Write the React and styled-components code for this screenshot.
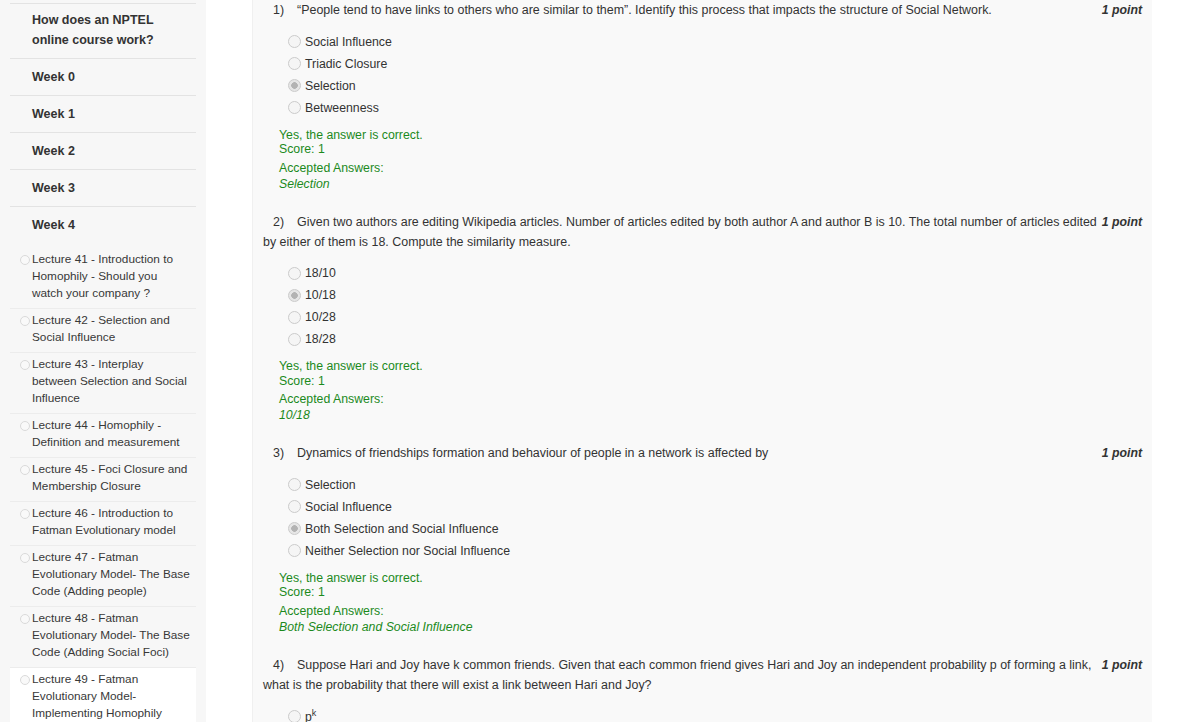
import React from "react";
import styled, { createGlobalStyle } from "styled-components";

const GlobalStyle = createGlobalStyle`
    body {
        margin: 0;
        background: #fff;
        font-family: "Liberation Sans", Arial, sans-serif;
        color: #333;
    }
`;

const Page = styled.div`
    display: flex;
    align-items: stretch;
    height: 722px;
    overflow: hidden;
`;

const Sidebar = styled.nav`
    width: 206px;
    flex-shrink: 0;
    box-sizing: border-box;
    background: #f7f7f7;
    padding: 3px 10px 0;
`;

const NavHeading = styled.div`
    padding: ${(props) => (props.$tall ? "6px 10px 8px 22px" : "11px 10px 11px 22px")};
    line-height: ${(props) => (props.$tall ? "20px" : "14px")};
    font-size: 12.5px;
    font-weight: bold;
    color: #333;
    border-top: ${(props) => (props.$first ? "1px solid #e3e3e3" : "none")};
    border-bottom: ${(props) => (props.$open ? "none" : "1px solid #e3e3e3")};
`;

const LectureList = styled.div`
    margin-top: 5px;
`;

const Lecture = styled.div`
    display: flex;
    align-items: flex-start;
    padding: 3px 5.5px 6px 10px;
    font-size: 11.8px;
    line-height: 17px;
    color: #383838;
    background: ${(props) => (props.$active ? "#fff" : "transparent")};
    border-bottom: 1px solid ${(props) => (props.$active ? "#fff" : "#ececec")};
`;

const LectureDot = styled.span`
    width: 8px;
    height: 8px;
    flex-shrink: 0;
    margin: 4px 2px 0 0;
    border: 1px solid #dadada;
    border-radius: 50%;
    background: #f9f9f9;
`;

const Main = styled.main`
    width: 900px;
    flex-shrink: 0;
    box-sizing: border-box;
    margin-left: 46px;
    padding: 0 10px 0 10px;
    background: #f9f9f9;
    border-left: 1px solid #f0f0f0;
    font-size: 12.3px;
    color: #333;
`;

const Question = styled.section`
    margin-top: ${(props) => (props.$first ? "0" : "19px")};
`;

const QText = styled.div`
    font-size: 12.45px;
    line-height: 20px;
    text-indent: 10px;
`;

const Num = styled.span`
    margin-right: 13px;
`;

const Points = styled.span`
    float: right;
    font-size: 12.3px;
    font-weight: bold;
    font-style: italic;
    text-indent: 0;
`;

const Options = styled.div`
    margin-top: 10.5px;
    padding-left: 25px;
`;

const OptionRow = styled.label`
    display: flex;
    align-items: center;
    height: 22px;
`;

const Radio = styled.span`
    width: 11px;
    height: 11px;
    flex-shrink: 0;
    margin-right: 4px;
    border: 1px solid #cbcbcb;
    border-radius: 50%;
    background: ${(props) =>
        props.$checked
            ? "radial-gradient(circle, #b3b3b3 0 3px, #e6e6e6 3.6px)"
            : "#f5f5f5"};
`;

const Sup = styled.sup`
    font-size: 9px;
`;

const Feedback = styled.div`
    margin-top: 9px;
    padding-left: 16px;
    color: #1c8a1c;
`;

const FeedLine = styled.div`
    line-height: 14.5px;
`;

const Accepted = styled.div`
    margin-top: 3px;
    line-height: 16px;
`;

const AnswerText = styled.div`
    line-height: 17px;
    font-style: italic;
`;

const questions = [
    {
        n: "1)",
        text: "“People tend to have links to others who are similar to them”. Identify this process that impacts the structure of Social Network.",
        options: ["Social Influence", "Triadic Closure", "Selection", "Betweenness"],
        checked: 2,
        answer: "Selection",
    },
    {
        n: "2)",
        text: "Given two authors are editing Wikipedia articles. Number of articles edited by both author A and author B is 10. The total number of articles edited by either of them is 18. Compute the similarity measure.",
        options: ["18/10", "10/18", "10/28", "18/28"],
        checked: 1,
        answer: "10/18",
    },
    {
        n: "3)",
        text: "Dynamics of friendships formation and behaviour of people in a network is affected by",
        options: [
            "Selection",
            "Social Influence",
            "Both Selection and Social Influence",
            "Neither Selection nor Social Influence",
        ],
        checked: 2,
        answer: "Both Selection and Social Influence",
    },
    {
        n: "4)",
        text: "Suppose Hari and Joy have k common friends. Given that each common friend gives Hari and Joy an independent probability p of forming a link, what is the probability that there will exist a link between Hari and Joy?",
        options: [
            <>
                p<Sup>k</Sup>
            </>,
        ],
        checked: -1,
    },
];

const lectures = [
    "Lecture 41 - Introduction to Homophily - Should you watch your company ?",
    "Lecture 42 - Selection and Social Influence",
    "Lecture 43 - Interplay between Selection and Social Influence",
    "Lecture 44 - Homophily - Definition and measurement",
    "Lecture 45 - Foci Closure and Membership Closure",
    "Lecture 46 - Introduction to Fatman Evolutionary model",
    "Lecture 47 - Fatman Evolutionary Model- The Base Code (Adding people)",
    "Lecture 48 - Fatman Evolutionary Model- The Base Code (Adding Social Foci)",
    "Lecture 49 - Fatman Evolutionary Model- Implementing Homophily",
];

export default function App() {
    return (
        <>
            <GlobalStyle />
            <Page>
                <Sidebar>
                    <NavHeading $tall $first>
                        How does an NPTEL
                        <br />
                        online course work?
                    </NavHeading>
                    <NavHeading>Week 0</NavHeading>
                    <NavHeading>Week 1</NavHeading>
                    <NavHeading>Week 2</NavHeading>
                    <NavHeading>Week 3</NavHeading>
                    <NavHeading $open>Week 4</NavHeading>
                    <LectureList>
                        {lectures.map((l, i) => (
                            <Lecture key={l} $active={i === lectures.length - 1}>
                                <LectureDot />
                                <span>{l}</span>
                            </Lecture>
                        ))}
                    </LectureList>
                </Sidebar>
                <Main>
                    {questions.map((q, qi) => (
                        <Question key={q.n} $first={qi === 0}>
                            <QText>
                                <Points>1 point</Points>
                                <Num>{q.n}</Num>
                                {q.text}
                            </QText>
                            <Options>
                                {q.options.map((o, oi) => (
                                    <OptionRow key={oi}>
                                        <Radio $checked={oi === q.checked} />
                                        <span>{o}</span>
                                    </OptionRow>
                                ))}
                            </Options>
                            {q.answer && (
                                <Feedback>
                                    <FeedLine>Yes, the answer is correct.</FeedLine>
                                    <FeedLine>Score: 1</FeedLine>
                                    <Accepted>Accepted Answers:</Accepted>
                                    <AnswerText>{q.answer}</AnswerText>
                                </Feedback>
                            )}
                        </Question>
                    ))}
                </Main>
            </Page>
        </>
    );
}
